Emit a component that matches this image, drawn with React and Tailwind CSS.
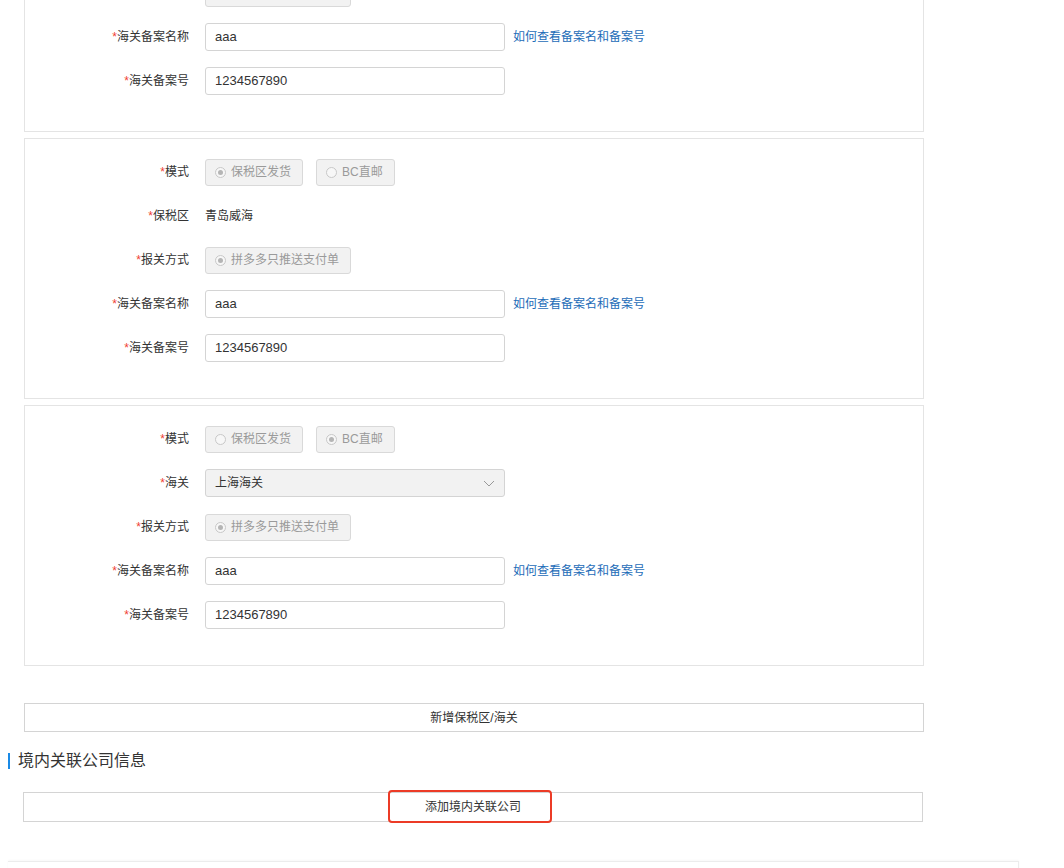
const FONT = { fontFamily: '"Liberation Sans", "Noto Sans CJK SC", sans-serif' };

const Label = ({ children }) => (
  <div className="w-[164px] shrink-0 text-right text-[12px] text-[#333]">
    <span className="text-[#f04134]">*</span>
    {children}
  </div>
);

const Row = ({ label, children }) => (
  <div className="flex h-[28px] items-center">
    <Label>{label}</Label>
    <div className="ml-[16px] flex items-center">{children}</div>
  </div>
);

const Radio = ({ checked, children }) => (
  <div className="flex h-[27px] items-center rounded-[3px] border border-[#d9d9d9] bg-[#f2f2f2] pl-[9px] pr-[11px] text-[12px] text-[#9a9a9a]">
    <span className="mr-[5px] flex h-[11px] w-[11px] items-center justify-center rounded-full border border-[#c8c8c8] bg-[#f7f7f7]">
      {checked && <span className="h-[5px] w-[5px] rounded-full bg-[#b5b5b5]" />}
    </span>
    {children}
  </div>
);

const Input = ({ value }) => (
  <div className="flex h-[28px] w-[300px] items-center rounded-[3px] border border-[#d4d4d4] bg-white px-[9px] text-[13px] text-[#333]">
    {value}
  </div>
);

const Link = () => (
  <span className="ml-[8px] text-[12px] text-[#1d6cb8]">如何查看备案名和备案号</span>
);

const Card = ({ mode }) => (
  <div className="flex flex-col gap-[16px] border border-[#e4e4e4] pt-[19px] pb-[36px]">
    <Row label="模式">
      <div className="flex gap-[13px]">
        <Radio checked={mode === "bonded"}>保税区发货</Radio>
        <Radio checked={mode === "bc"}>BC直邮</Radio>
      </div>
    </Row>
    {mode === "bonded" ? (
      <Row label="保税区">
        <span className="text-[12px] text-[#333]">青岛威海</span>
      </Row>
    ) : (
      <Row label="海关">
        <div className="flex h-[28px] w-[300px] items-center justify-between rounded-[3px] border border-[#d4d4d4] bg-[#f2f2f2] pl-[9px] pr-[9px] text-[12px] text-[#333]">
          上海海关
          <svg width="12" height="7" viewBox="0 0 12 7" fill="none">
            <path d="M1 1l5 5 5-5" stroke="#999" strokeWidth="1" />
          </svg>
        </div>
      </Row>
    )}
    <Row label="报关方式">
      <Radio checked>拼多多只推送支付单</Radio>
    </Row>
    <Row label="海关备案名称">
      <Input value="aaa" />
      <Link />
    </Row>
    <Row label="海关备案号">
      <Input value="1234567890" />
    </Row>
  </div>
);

export default function App() {
  return (
    <div className="h-[868px] overflow-hidden bg-white" style={FONT}>
      <div className="ml-[24px] mt-[-129px] flex w-[900px] flex-col gap-[6px]">
        <Card mode="bonded" />
        <Card mode="bonded" />
        <Card mode="bc" />
      </div>

      <div className="ml-[24px] mt-[37px] flex h-[29px] w-[900px] items-center justify-center border border-[#d4d4d4] text-[12px] text-[#333]">
        新增保税区/海关
      </div>

      <div className="ml-[8px] mt-[17px] flex h-[24px] items-center">
        <span className="h-[16px] w-[2px] bg-[#1a8ae6]" />
        <span className="ml-[8px] text-[16px] text-[#333]">境内关联公司信息</span>
      </div>

      <div className="relative ml-[23px] mt-[19px] flex h-[30px] w-[900px] items-center justify-center border border-[#d4d4d4] text-[12px] text-[#333]">
        添加境内关联公司
        <span className="absolute left-[364px] top-[-3px] h-[33px] w-[164px] rounded-[4px] border-2 border-[#ec3b26]" />
      </div>

      <div className="ml-[8px] mt-[39px] h-[40px] w-[1011px] border-t border-r border-[#ececec] shadow-[0_-1px_2px_rgba(0,0,0,0.03)]" />
    </div>
  );
}
